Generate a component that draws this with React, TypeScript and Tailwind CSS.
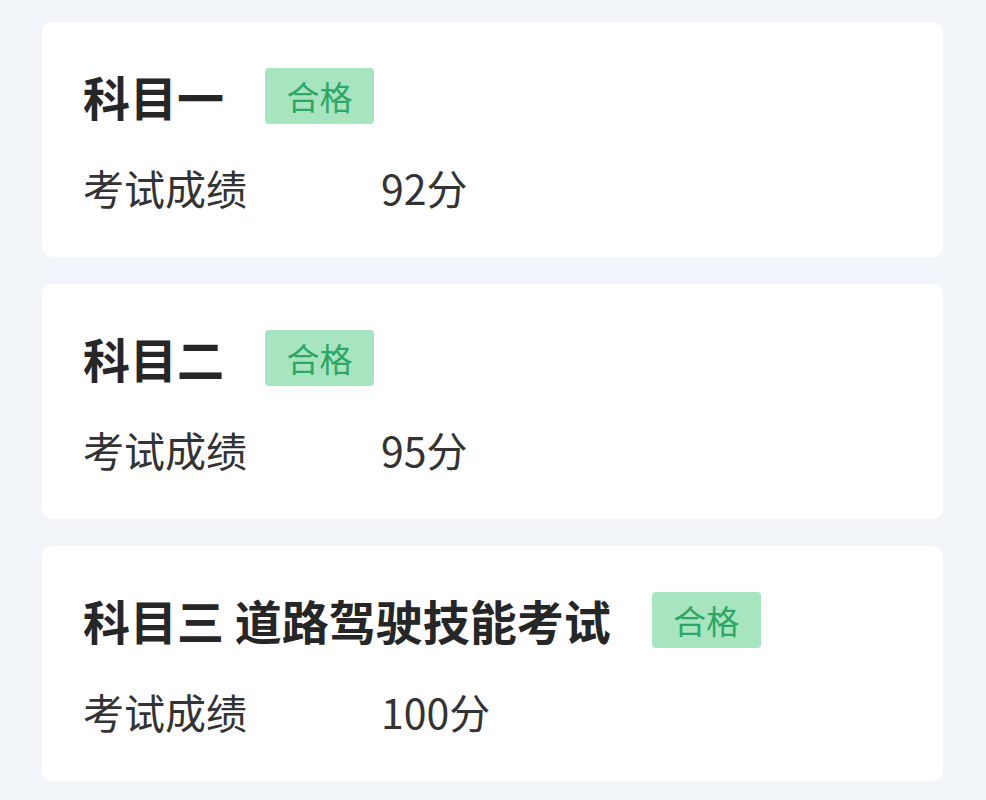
import React from "react";

const font = { fontFamily: '"Noto Sans CJK SC", "Noto Sans", sans-serif' };

type Item = { title: string; score: string };

const items: Item[] = [
  { title: "科目一", score: "92分" },
  { title: "科目二", score: "95分" },
  { title: "科目三 道路驾驶技能考试", score: "100分" },
];

function Card({ item }: { item: Item }) {
  return (
    <div className="h-[235px] w-[901px] rounded-[10px] bg-white pl-[41px] pt-[46px]">
      <div className="flex h-[56px] items-center gap-[41px]">
        <span className="-mt-[2px] text-[47px] font-bold leading-none text-[#262626]">{item.title}</span>
        <span className="flex h-[56px] w-[109px] items-center justify-center rounded-[4px] bg-[#a7e5c1] text-[33px] leading-none text-[#2ea664]">
          合格
        </span>
      </div>
      <div className="mt-[35px] flex h-[56px] items-center text-[41px] leading-none text-[#333333]">
        <span className="w-[298px]">考试成绩</span>
        <span>{item.score}</span>
      </div>
    </div>
  );
}

export default function App() {
  return (
    <div style={font} className="flex min-h-[800px] w-[986px] flex-col gap-[27px] bg-[#f2f5f9] pl-[42px] pt-[22px]">
      {items.map((it) => (
        <Card key={it.title} item={it} />
      ))}
    </div>
  );
}
